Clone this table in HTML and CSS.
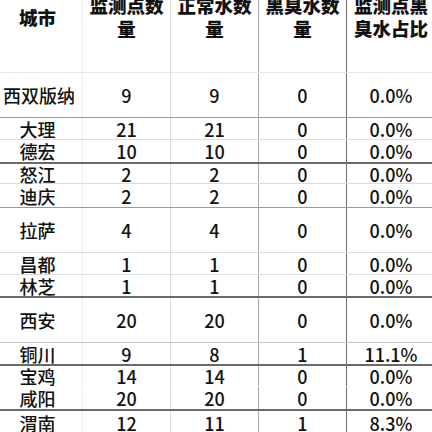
FILE: index.html
```html
<!DOCTYPE html>
<html lang="zh">
<head>
<meta charset="utf-8">
<link rel="stylesheet" href="styles.css">
</head>
<body>
<div class="sheet">
  <div class="row head">
    <div class="cell c1"><div class="ht single">城市</div></div>
    <div class="cell c2"><div class="ht">监测点数<br>量</div></div>
    <div class="cell c3"><div class="ht">正常水数<br>量</div></div>
    <div class="cell c4"><div class="ht">黑臭水数<br>量</div></div>
    <div class="cell c5"><div class="ht">监测点黑<br>臭水占比</div></div>
  </div>
  <div class="row h45 b-mid"><div class="cell c1 wide">西双版纳</div><div class="cell c2">9</div><div class="cell c3">9</div><div class="cell c4">0</div><div class="cell c5">0.0%</div></div>
  <div class="row h22 b-light"><div class="cell c1">大理</div><div class="cell c2">21</div><div class="cell c3">21</div><div class="cell c4">0</div><div class="cell c5">0.0%</div></div>
  <div class="row h24 b-dark"><div class="cell c1">德宏</div><div class="cell c2">10</div><div class="cell c3">10</div><div class="cell c4">0</div><div class="cell c5">0.0%</div></div>
  <div class="row h20 b-light"><div class="cell c1">怒江</div><div class="cell c2">2</div><div class="cell c3">2</div><div class="cell c4">0</div><div class="cell c5">0.0%</div></div>
  <div class="row h24 b-mid"><div class="cell c1">迪庆</div><div class="cell c2">2</div><div class="cell c3">2</div><div class="cell c4">0</div><div class="cell c5">0.0%</div></div>
  <div class="row h45 b-light"><div class="cell c1">拉萨</div><div class="cell c2">4</div><div class="cell c3">4</div><div class="cell c4">0</div><div class="cell c5">0.0%</div></div>
  <div class="row h22 b-light"><div class="cell c1">昌都</div><div class="cell c2">1</div><div class="cell c3">1</div><div class="cell c4">0</div><div class="cell c5">0.0%</div></div>
  <div class="row h23 b-dark"><div class="cell c1">林芝</div><div class="cell c2">1</div><div class="cell c3">1</div><div class="cell c4">0</div><div class="cell c5">0.0%</div></div>
  <div class="row h45 b-soft"><div class="cell c1">西安</div><div class="cell c2">20</div><div class="cell c3">20</div><div class="cell c4">0</div><div class="cell c5">0.0%</div></div>
  <div class="row h23 b-dark"><div class="cell c1">铜川</div><div class="cell c2">9</div><div class="cell c3">8</div><div class="cell c4">1</div><div class="cell c5">11.1%</div></div>
  <div class="row h21"><div class="cell c1">宝鸡</div><div class="cell c2">14</div><div class="cell c3">14</div><div class="cell c4">0</div><div class="cell c5">0.0%</div></div>
  <div class="row h24 b-dark"><div class="cell c1">咸阳</div><div class="cell c2">20</div><div class="cell c3">20</div><div class="cell c4">0</div><div class="cell c5">0.0%</div></div>
  <div class="row h24"><div class="cell c1">渭南</div><div class="cell c2">12</div><div class="cell c3">11</div><div class="cell c4">1</div><div class="cell c5">8.3%</div></div>
</div>
</body>
</html>
```
FILE: styles.css
```css
html, body {
  margin: 0;
  padding: 0;
  background: #ffffff;
  overflow: hidden;
  width: 432px;
  height: 432px;
}
.sheet {
  margin-left: -7px;
  width: 442px;
  font-family: "Noto Sans CJK SC", "Noto Sans", sans-serif;
  color: #111111;
  font-size: 18px;
  font-weight: 500;
}
.row {
  display: grid;
  grid-template-columns: 90px 88px 88px 88px 88px;
  box-sizing: border-box;
  border-bottom: 1px solid transparent;
}
.cell {
  display: flex;
  align-items: center;
  justify-content: center;
  box-sizing: border-box;
  line-height: 1;
  white-space: nowrap;
  overflow: visible;
}
.c1 { border-right: 1px solid #ececec; }
.c2 { border-right: 1px solid #dcdcdc; }
.c3 { border-right: 1px solid #a8a8a8; }
.c4 { border-right: 1px solid #6e6e6e; }
.c1.wide { justify-content: flex-start; padding-left: 10px; }

.head { height: 73px; border-bottom: 1px solid #e8e8e8; }
.head .cell { align-items: flex-start; }
.ht {
  margin-top: -6px;
  font-weight: 900;
  font-size: 18.5px;
  line-height: 23px;
  text-align: center;
  letter-spacing: 0;
}
.ht.single { height: 46px; line-height: 46px; }

.h20 { height: 20px; }
.h21 { height: 21px; }
.h22 { height: 22px; }
.h23 { height: 23px; }
.h24 { height: 24px; }
.h45 { height: 45px; }

.b-light { border-bottom: 1px solid #dddddd; }
.b-soft { border-bottom: 1px solid #c4c4c4; }
.b-mid { border-bottom: 1px solid #9a9a9a; }
.b-dark { border-bottom: 2px solid #6a6a6a; }
```
